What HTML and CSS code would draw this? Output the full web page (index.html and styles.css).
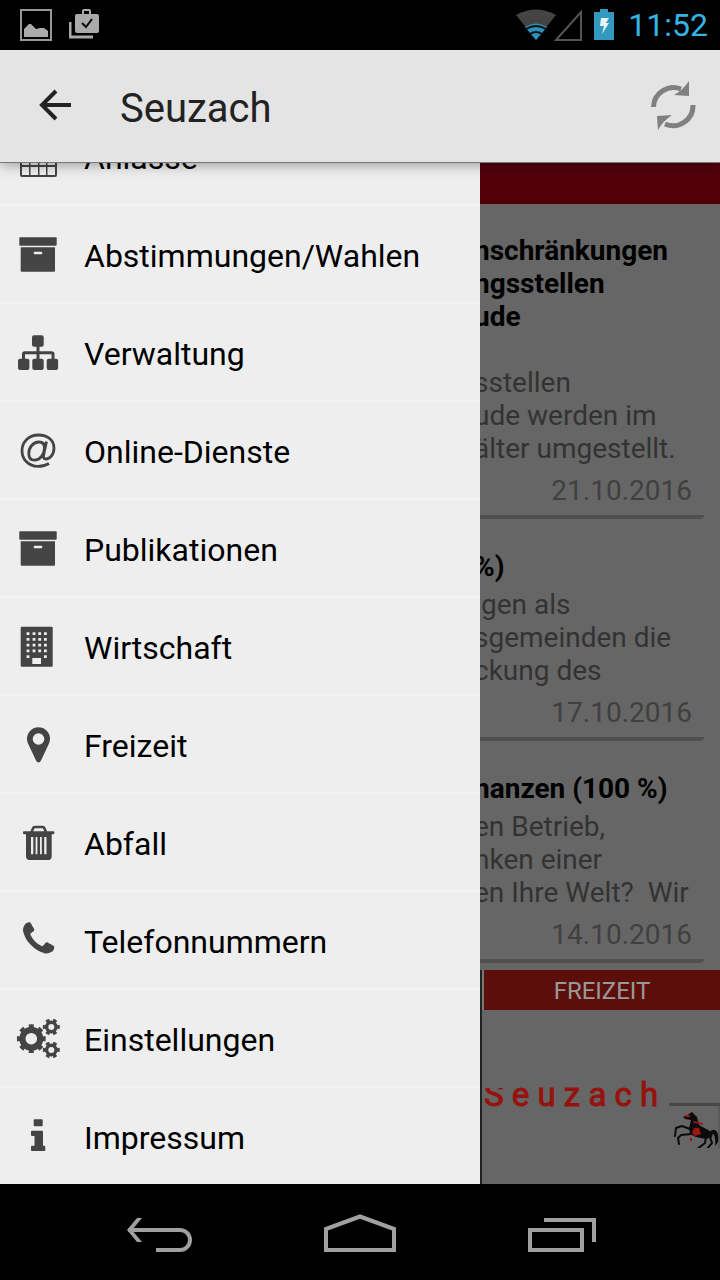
FILE: index.html
```html
<!DOCTYPE html>
<html lang="de">
<head>
  <meta charset="UTF-8">
  <meta name="viewport" content="width=device-width, initial-scale=1">
  <title>Seuzach</title>
  <link rel="stylesheet" href="styles.css">
</head>
<body>
  <div class="statusbar">
    <svg width="32" height="32" viewBox="0 0 32 32"><rect x="1" y="1" width="30" height="30" fill="none" stroke="#999" stroke-width="2"/><path d="M4 28V20L9 15H11L16 20L20 19H24L28 22V28Z" fill="#aaa"/></svg>
    <svg class="bag" width="30" height="32" viewBox="0 0 30 32"><path d="M1 13V28H24" fill="none" stroke="#aaa" stroke-width="3"/><path d="M14 6V2Q14 1 15 1H20Q21 1 21 2V6" fill="none" stroke="#aaa" stroke-width="2"/><rect x="6" y="5" width="24" height="19" rx="2" fill="#aaa"/><path d="M13 14L17 18L23 10" fill="none" stroke="#000" stroke-width="2"/></svg>
    <svg class="wifi" width="40" height="32" viewBox="0 0 40 32"><path d="M0 6Q20 -5 40 6L20 31Z" fill="#444"/><path d="M9 18Q20 11 31 18L20 31Z" fill="#2b93ba"/><path d="M10 20Q20 14 30 20M14 25Q20 21 26 25" fill="none" stroke="#111" stroke-width="2"/></svg>
    <svg width="28" height="32" viewBox="0 0 28 32"><path d="M2 31L27 3V31Z" fill="none" stroke="#555" stroke-width="2"/></svg>
    <svg class="battery" width="20" height="32" viewBox="0 0 20 32"><path d="M0 3H6V0H14V3H20V31H0Z" fill="#3399bf"/><path d="M7 9H15L12 14H15L8 25L10 17H6Z" fill="#e8f6fc"/></svg>
    <span class="clock">11:52</span>
  </div>

  <header class="appbar">
    <button class="icon-btn" aria-label="Zurück">
      <svg width="34" height="34" viewBox="0 0 34 34"><path d="M18 2L4 16L18 30M4 16H33" fill="none" stroke="#222" stroke-width="4"/></svg>
    </button>
    <h1>Seuzach</h1>
    <button class="icon-btn" aria-label="Aktualisieren">
      <svg width="48" height="50" viewBox="0 0 48 50"><path d="M4.500 26A20 20 0 0 1 32 8M44 24A20 20 0 0 1 16 43" fill="none" stroke="#808080" stroke-width="5"/><path d="M40 0V15L25 14Q34 9 40 0ZM8 35L23 34Q14 40 9 49Z" fill="#808080"/></svg>
    </button>
  </header>

  <div class="content">
    <nav class="drawer">
      <ul>
        <li><a href="#"><svg class="icon" viewBox="0 0 44 44"><path fill-rule="evenodd" d="M6 6H39Q41 6 41 8V41Q41 43 39 43H6Q4 43 4 41V8Q4 6 6 6ZM6 15V22H13V15ZM14.500 15V22H22V15ZM23.500 15V22H30V15ZM31.500 15V22H39V15ZM6 23.500V31H13V23.500ZM14.500 23.500V31H22V23.500ZM23.500 23.500V31H30V23.500ZM31.500 23.500V31H39V23.500ZM6 33V41H13V33ZM14.500 33V41H22V33ZM23.500 33V41H30V33ZM31.500 33V41H39V33Z"/></svg><span>Anlässe</span></a></li>
        <li><a href="#"><svg class="icon" viewBox="0 0 44 44"><rect x="3.300" y="5.300" width="37.400" height="8.400" rx="1"/><path fill-rule="evenodd" d="M4.700 15.300H39V38.700Q39 39.700 38 39.700H5.700Q4.700 39.700 4.700 38.700ZM18.700 19.700Q17.700 19.700 17.700 21T18.700 22.300H25.300Q26.300 22.300 26.300 21T25.300 19.700Z"/></svg><span>Abstimmungen/Wahlen</span></a></li>
        <li><a href="#"><svg class="icon" viewBox="0 0 44 44"><rect x="16" y="5.300" width="11.700" height="11.400" rx="2"/><rect x="2" y="28.700" width="11.400" height="11.300" rx="2"/><rect x="16.300" y="28.700" width="11.400" height="11.300" rx="2"/><rect x="30.700" y="28.700" width="11.400" height="11.300" rx="2"/><path d="M22 16V29M7.500 29V24Q7.500 22.700 9 22.700H35.500Q37 22.700 37 24V29" fill="none" stroke="#444" stroke-width="3"/></svg><span>Verwaltung</span></a></li>
        <li><a href="#"><svg class="icon" viewBox="0 0 44 44"><path d="M33 35.500C29 38 26 38.400 22 38.400C12.500 38.400 6 31.500 6 22.700C6 13.500 13 7 22.500 7C31.500 7 38 12 38 20C38 27 33.500 31 30 31C27.500 31 27.200 29 27.700 26.500L30.500 13.500M28.500 20C28.500 16 26.500 14 23 14C17 14 12.800 19.500 12.800 25.500C12.800 30 15 32.200 18.500 32.200C24 32.200 28.500 26 28.500 20Z" fill="none" stroke="#444" stroke-width="2.800"/></svg><span>Online-Dienste</span></a></li>
        <li><a href="#"><svg class="icon" viewBox="0 0 44 44"><rect x="3.300" y="5.300" width="37.400" height="8.400" rx="1"/><path fill-rule="evenodd" d="M4.700 15.300H39V38.700Q39 39.700 38 39.700H5.700Q4.700 39.700 4.700 38.700ZM18.700 19.700Q17.700 19.700 17.700 21T18.700 22.300H25.300Q26.300 22.300 26.300 21T25.300 19.700Z"/></svg><span>Publikationen</span></a></li>
        <li><a href="#"><svg class="icon" viewBox="0 0 44 44"><rect x="4.700" y="2.700" width="32" height="40" rx="1"/><path d="M12 8.200V34.500M29.400 8.200V34.500M18 8.200V29M23.700 8.200V29" fill="none" stroke="#eee" stroke-width="2.800" stroke-dasharray="2.800 2.950"/><rect x="16.300" y="34" width="8.700" height="6" fill="#eee"/></svg><span>Wirtschaft</span></a></li>
        <li><a href="#"><svg class="icon" viewBox="0 0 44 44"><path fill-rule="evenodd" d="M22.500 5.300A11.500 11.500 0 0 1 34 17Q34 19.500 33 21.500L25 38.500Q24 40.500 22.500 40.500T20 38.500L12 21.500Q11 19.500 11 17A11.500 11.500 0 0 1 22.500 5.300ZM22.500 11.200A5.800 5.800 0 1 0 22.500 22.800A5.800 5.800 0 1 0 22.500 11.200Z"/></svg><span>Freizeit</span></a></li>
        <li><a href="#"><svg class="icon" viewBox="0 0 44 44"><path d="M15.500 12L17 8.500Q17.500 7 19 7H26.500Q28 7 28.500 8.500L30 12" fill="none" stroke="#444" stroke-width="2.600"/><rect x="7" y="11.300" width="31.300" height="2.900" rx="1"/><path fill-rule="evenodd" d="M10 13H35.700V36Q35.700 40 32.500 40H13.500Q10 40 10 36ZM15 17V34.300H17.300V17ZM19.600 17V34.300H21.400V17ZM24 17V34.300H25.800V17ZM28.200 17V34.300H30.500V17Z"/></svg><span>Abfall</span></a></li>
        <li><a href="#"><svg class="icon" viewBox="0 0 44 44"><path transform="translate(2.740 1.400) scale(.0222)" d="M1600 1240q0 27-10 70.500t-20.500 68.500q-21 50-122 106-94 51-186 51-27 0-52.500-3.500t-57.500-12.500-47.500-14.500-55.500-20.500-49-18q-98-35-175-83-128-79-264.500-215.500t-215.500-264.500q-48-77-83-175-3-9-18-49t-20.500-55.500-14.500-47.500-12.500-57.500-3.500-52.500q0-92 51-186 56-101 106-122 25-10 68.500-20.500t70.500-10.500q14 0 21 3 18 6 53 76 11 19 30 54t35 63.500 31 53.500q3 4 17.500 25t21.500 35.500 7 28.500q0 20-28.500 50t-62 55-62 53-28.500 46q0 9 5 22.500t8.500 20.500 14 24 11.500 19q76 137 174 235t235 174q2 1 19 11.500t24 14 20.500 8.500 22.500 5q18 0 46-28.500t53-62 55-62 50-28.500q14 0 28.500 7t35.500 21.500 25 17.500q25 15 53.500 31t63.500 35 54 30q70 35 76 53 3 7 3 21z"/></svg><span>Telefonnummern</span></a></li>
        <li><a href="#"><svg class="icon" viewBox="0 0 44 44"><g fill="none" stroke="#444"><circle cx="15.300" cy="22.700" r="8.900" stroke-width="6.200"/><circle cx="15.300" cy="22.700" r="12.500" stroke-width="3.800" pathLength="16" stroke-dasharray="1 1" stroke-dashoffset=".5"/><circle cx="35.300" cy="11" r="4.700" stroke-width="3.400"/><circle cx="35.300" cy="11" r="6.900" stroke-width="3.200" pathLength="12" stroke-dasharray="1 1" stroke-dashoffset=".5"/><circle cx="35.300" cy="34" r="4.700" stroke-width="3.400"/><circle cx="35.300" cy="34" r="6.900" stroke-width="3.200" pathLength="12" stroke-dasharray="1 1" stroke-dashoffset=".5"/></g></svg><span>Einstellungen</span></a></li>
        <li><a href="#"><svg class="icon" viewBox="0 0 44 44"><rect x="17.700" y="5.300" width="9" height="7" rx="1"/><path d="M16 16.700H26Q27 16.700 27 17.700V31.700H28.300Q29.300 31.700 29.300 32.700V36Q29.300 37 28.300 37H16Q15 37 15 36V32.700Q15 31.700 16 31.700H18.500V22H16Q15 22 15 21V17.700Q15 16.700 16 16.700Z"/></svg><span>Impressum</span></a></li>
      </ul>
    </nav>

    <main class="page">
      <div class="page-head"></div>
      <div class="news">
        <article class="card">
          <h2>nschränkungen<br>ngsstellen<br>ude</h2>
          <p class="late">sstellen<br>ude werden im<br>älter umgestellt.</p>
          <time datetime="2016-10-21">21.10.2016</time>
        </article>
        <article class="card">
          <h2>%)</h2>
          <p>&nbsp;gen als<br>sgemeinden die<br>ckung des</p>
          <time datetime="2016-10-17">17.10.2016</time>
        </article>
        <article class="card">
          <h2>nanzen (100 %)</h2>
          <p>en Betrieb,<br>nken einer<br>en Ihre Welt?&nbsp; Wir</p>
          <time datetime="2016-10-14">14.10.2016</time>
        </article>
      </div>
      <div class="tile">
        <a class="tile-head" href="#">FREIZEIT</a>
        <div class="tile-body">
          <svg class="logo" viewBox="0 0 236 100">
            <text x="0" y="58">S e u z a c h</text>
            <rect x="0" y="26" width="22" height="14" fill="#666"/>
            <path d="M185 56.500H236" fill="none" stroke="#484848" stroke-width="3"/>
            <path d="M235 58V100" fill="none" stroke="#505050"/>
            <g fill="#0b0b0b">
              <path d="M199 69L205 66L208 64L210 66L213 69L215 77L224 82Q230 84 228 89L222 91L212 89L206 86L205 80L207 72L201 71Z"/>
              <path d="M226 85Q227 81 231 82Q235 84 234 94L231 98Q232 88 229 86Z"/>
            </g>
            <g fill="none" stroke="#0b0b0b" stroke-width="2" stroke-linecap="round" stroke-linejoin="round">
              <path d="M206 81L198 78L192 80L191 88M207 86L197 87L194 90L195 96"/>
              <path d="M222 89L221 95L212 102M226 89L228 95L223 101L219 104"/>
            </g>
            <path d="M210 80L215 80L217 86L211 88L208 85ZM201 67H206V69H201ZM209 73L219 75V77L210 75ZM206 90H208V93H206Z" fill="#a01511"/>
          </svg>
        </div>
      </div>
    </main>
  </div>

  <footer class="navbar">
    <button aria-label="Zurück"><svg width="72" height="48" viewBox="0 0 72 48"><path d="M4 22H56A10 10 0 0 1 56 42H32" /><path d="M18 10H13L3 22L13 34H18L8 22Z" fill="#a0a0a0" stroke="none"/></svg></button>
    <button aria-label="Startseite"><svg width="72" height="48" viewBox="0 0 72 48"><path d="M2 21V42H70V21L36 8.500Z"/></svg></button>
    <button aria-label="Letzte Apps"><svg width="72" height="48" viewBox="0 0 72 48"><path d="M6 22H58V42H6ZM20 12H70V34"/></svg></button>
  </footer>
</body>
</html>
```
FILE: styles.css
```css
* { box-sizing: border-box; }
body { margin: 0; height: 100vh; display: flex; flex-direction: column; overflow: hidden;
       font-family: Roboto, sans-serif; background: #000; color: #000; }
button { padding: 0; border: none; background: none; cursor: pointer; }
a { color: inherit; text-decoration: none; }
svg { display: block; flex: none; }
h1, h2, p, ul { margin: 0; padding: 0; }

.statusbar { height: 50px; flex: none; display: flex; align-items: center; padding: 0 12px 0 20px; }
.bag { margin-left: 17px; }
.wifi { margin-left: auto; margin-right: -2px; }
.battery { margin: 0 14px 0 12px; }
.clock { font-size: 32px; color: #33b5e5; }

.appbar { height: 113px; flex: none; display: flex; align-items: center; padding: 0 23px 0 38px;
          background: #e4e4e4; border-bottom: 1px solid #777; color: #222;
          position: relative; z-index: 2; box-shadow: 0 2px 12px rgba(0,0,0,0.35); }
.appbar h1 { flex: 1; margin-left: 48px; padding-top: 4px; font-size: 40px; font-weight: 400; }

.content { flex: 1; min-height: 0; display: flex; }

.drawer { flex: 0 0 66.667%; display: flex; flex-direction: column; justify-content: flex-end;
          overflow: hidden; background: #eee; }
.drawer ul { list-style: none; }
.drawer li { border-bottom: 2px solid #f3f3f3; }
.drawer li:last-child { border-bottom: none; }
.drawer a { display: flex; align-items: center; gap: 24px; height: 96px; padding-left: 16px; font-size: 32px; }
.drawer span { padding-top: 4px; }
.icon { width: 44px; height: 44px; fill: #444; }

.page { flex: 1; min-width: 0; display: flex; flex-direction: column; overflow: hidden; background: #666; }
.page-head { height: 41px; flex: none; background: #520009; }
.news { flex: 1; padding: 8px 16px 0 0; }
.card { display: flex; flex-direction: column; border-bottom: 4px solid #505050;
        border-bottom-right-radius: 4px; padding: 22px 12px 8px 0;
        font-size: 28px; line-height: 33px; }
.card + .card { padding-top: 31px; }
.card h2 { font-size: 28px; font-weight: 700; margin-left: -6px; white-space: nowrap; }
.card p { margin: 5px 0 9px -6px; color: #333; white-space: nowrap; }
.card .late { margin-top: 33px; }
.card time { color: #404040; text-align: right; }

.tile { flex: none; border-left: 2px solid #222; }
.tile-head { display: block; border-left: 2px solid #777; background: #5c0f0a; color: #999;
             font-size: 24px; line-height: 42px; height: 40px; text-align: center; }
.tile-body { height: 174px; padding: 38px 0 0 2px; }
.logo { width: 100%; }
.logo text { font-family: Roboto, sans-serif; font-size: 33px; fill: #96120e; stroke: #96120e; }

.navbar { height: 96px; flex: none; display: flex; padding: 0 60px; }
.navbar button { flex: 1; display: flex; align-items: center; justify-content: center; }
.navbar svg { fill: none; stroke: #a0a0a0; stroke-width: 4; }
```
